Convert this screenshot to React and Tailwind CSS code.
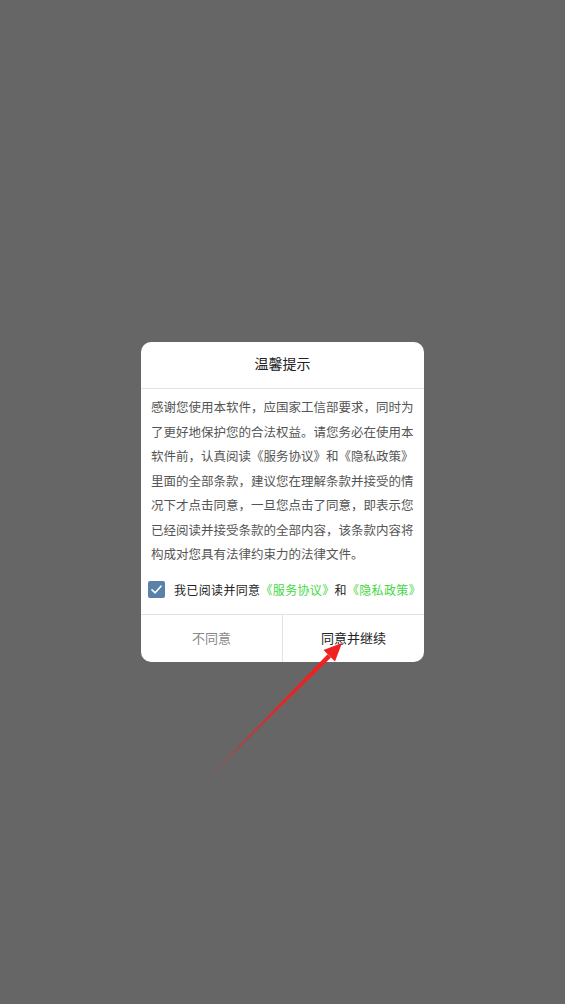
import React from "react";

// Privacy consent dialog shown on first launch
const App = () => {
  return (
    <div
      className="relative flex h-[1004px] w-full items-center justify-center overflow-hidden bg-[#666666]"
      style={{ fontFamily: '"Noto Sans CJK SC", "Noto Sans", sans-serif' }}
    >
      {/* Dialog */}
      <div className="w-[283px] overflow-hidden rounded-[10px] bg-white">
        {/* Title */}
        <div className="flex h-[47px] items-center justify-center border-b border-[#e3e3e3] pb-[3px] text-[14px] text-[#222222]">
          温馨提示
        </div>

        {/* Body */}
        <div className="px-[10px] pt-[6px]">
          <p className="text-[12.5px] leading-[24.5px] text-[#555555]">
            感谢您使用本软件，应国家工信部要求，同时为了更好地保护您的合法权益。请您务必在使用本软件前，认真阅读《服务协议》和《隐私政策》里面的全部条款，建议您在理解条款并接受的情况下才点击同意，一旦您点击了同意，即表示您已经阅读并接受条款的全部内容，该条款内容将构成对您具有法律约束力的法律文件。
          </p>
        </div>

        {/* Agree checkbox */}
        <div className="flex items-center gap-[9px] pb-[16px] pl-[7px] pt-[14px]">
          <div className="flex h-[17px] w-[17px] shrink-0 items-center justify-center rounded-[2px] bg-[#5a81a8]">
            <svg width="13" height="13" viewBox="0 0 13 13" fill="none">
              <path d="M2 6.8 L5.2 9.8 L11 3.2" stroke="white" strokeWidth="1.6" strokeLinecap="round" strokeLinejoin="round" />
            </svg>
          </div>
          <p className="whitespace-nowrap text-[12px] leading-[17px] tracking-[0.35px] text-[#222222]">
            我已阅读并同意<span className="text-[#44d844]">《服务协议》</span>和<span className="text-[#44d844]">《隐私政策》</span>
          </p>
        </div>

        {/* Buttons */}
        <div className="flex h-[48px] border-t border-[#e3e3e3]">
          <button className="flex flex-1 items-center justify-center pb-[2px] text-[13px] text-[#888888]">
            不同意
          </button>
          <div className="w-px bg-[#e3e3e3]" />
          <button className="flex flex-1 items-center justify-center pb-[2px] text-[13px] text-[#222222]">
            同意并继续
          </button>
        </div>
      </div>

      {/* Red pointer arrow over the page */}
      <svg
        className="pointer-events-none absolute left-0 top-0"
        width="565"
        height="1004"
        viewBox="0 0 565 1004"
      >
        <defs>
          <linearGradient id="arrowFade" x1="196" y1="790" x2="330" y2="656" gradientUnits="userSpaceOnUse">
            <stop offset="0" stopColor="#ee2222" stopOpacity="0.05" />
            <stop offset="0.3" stopColor="#ee2222" stopOpacity="0.5" />
            <stop offset="0.65" stopColor="#f02020" stopOpacity="0.9" />
            <stop offset="1" stopColor="#f02020" stopOpacity="1" />
          </linearGradient>
        </defs>
        <polygon points="196,790 331,657.6 327.6,654.2" fill="url(#arrowFade)" />
        <polygon points="342,643 335,661.5 323.5,650" fill="#f02020" />
      </svg>
    </div>
  );
};

export default App;
